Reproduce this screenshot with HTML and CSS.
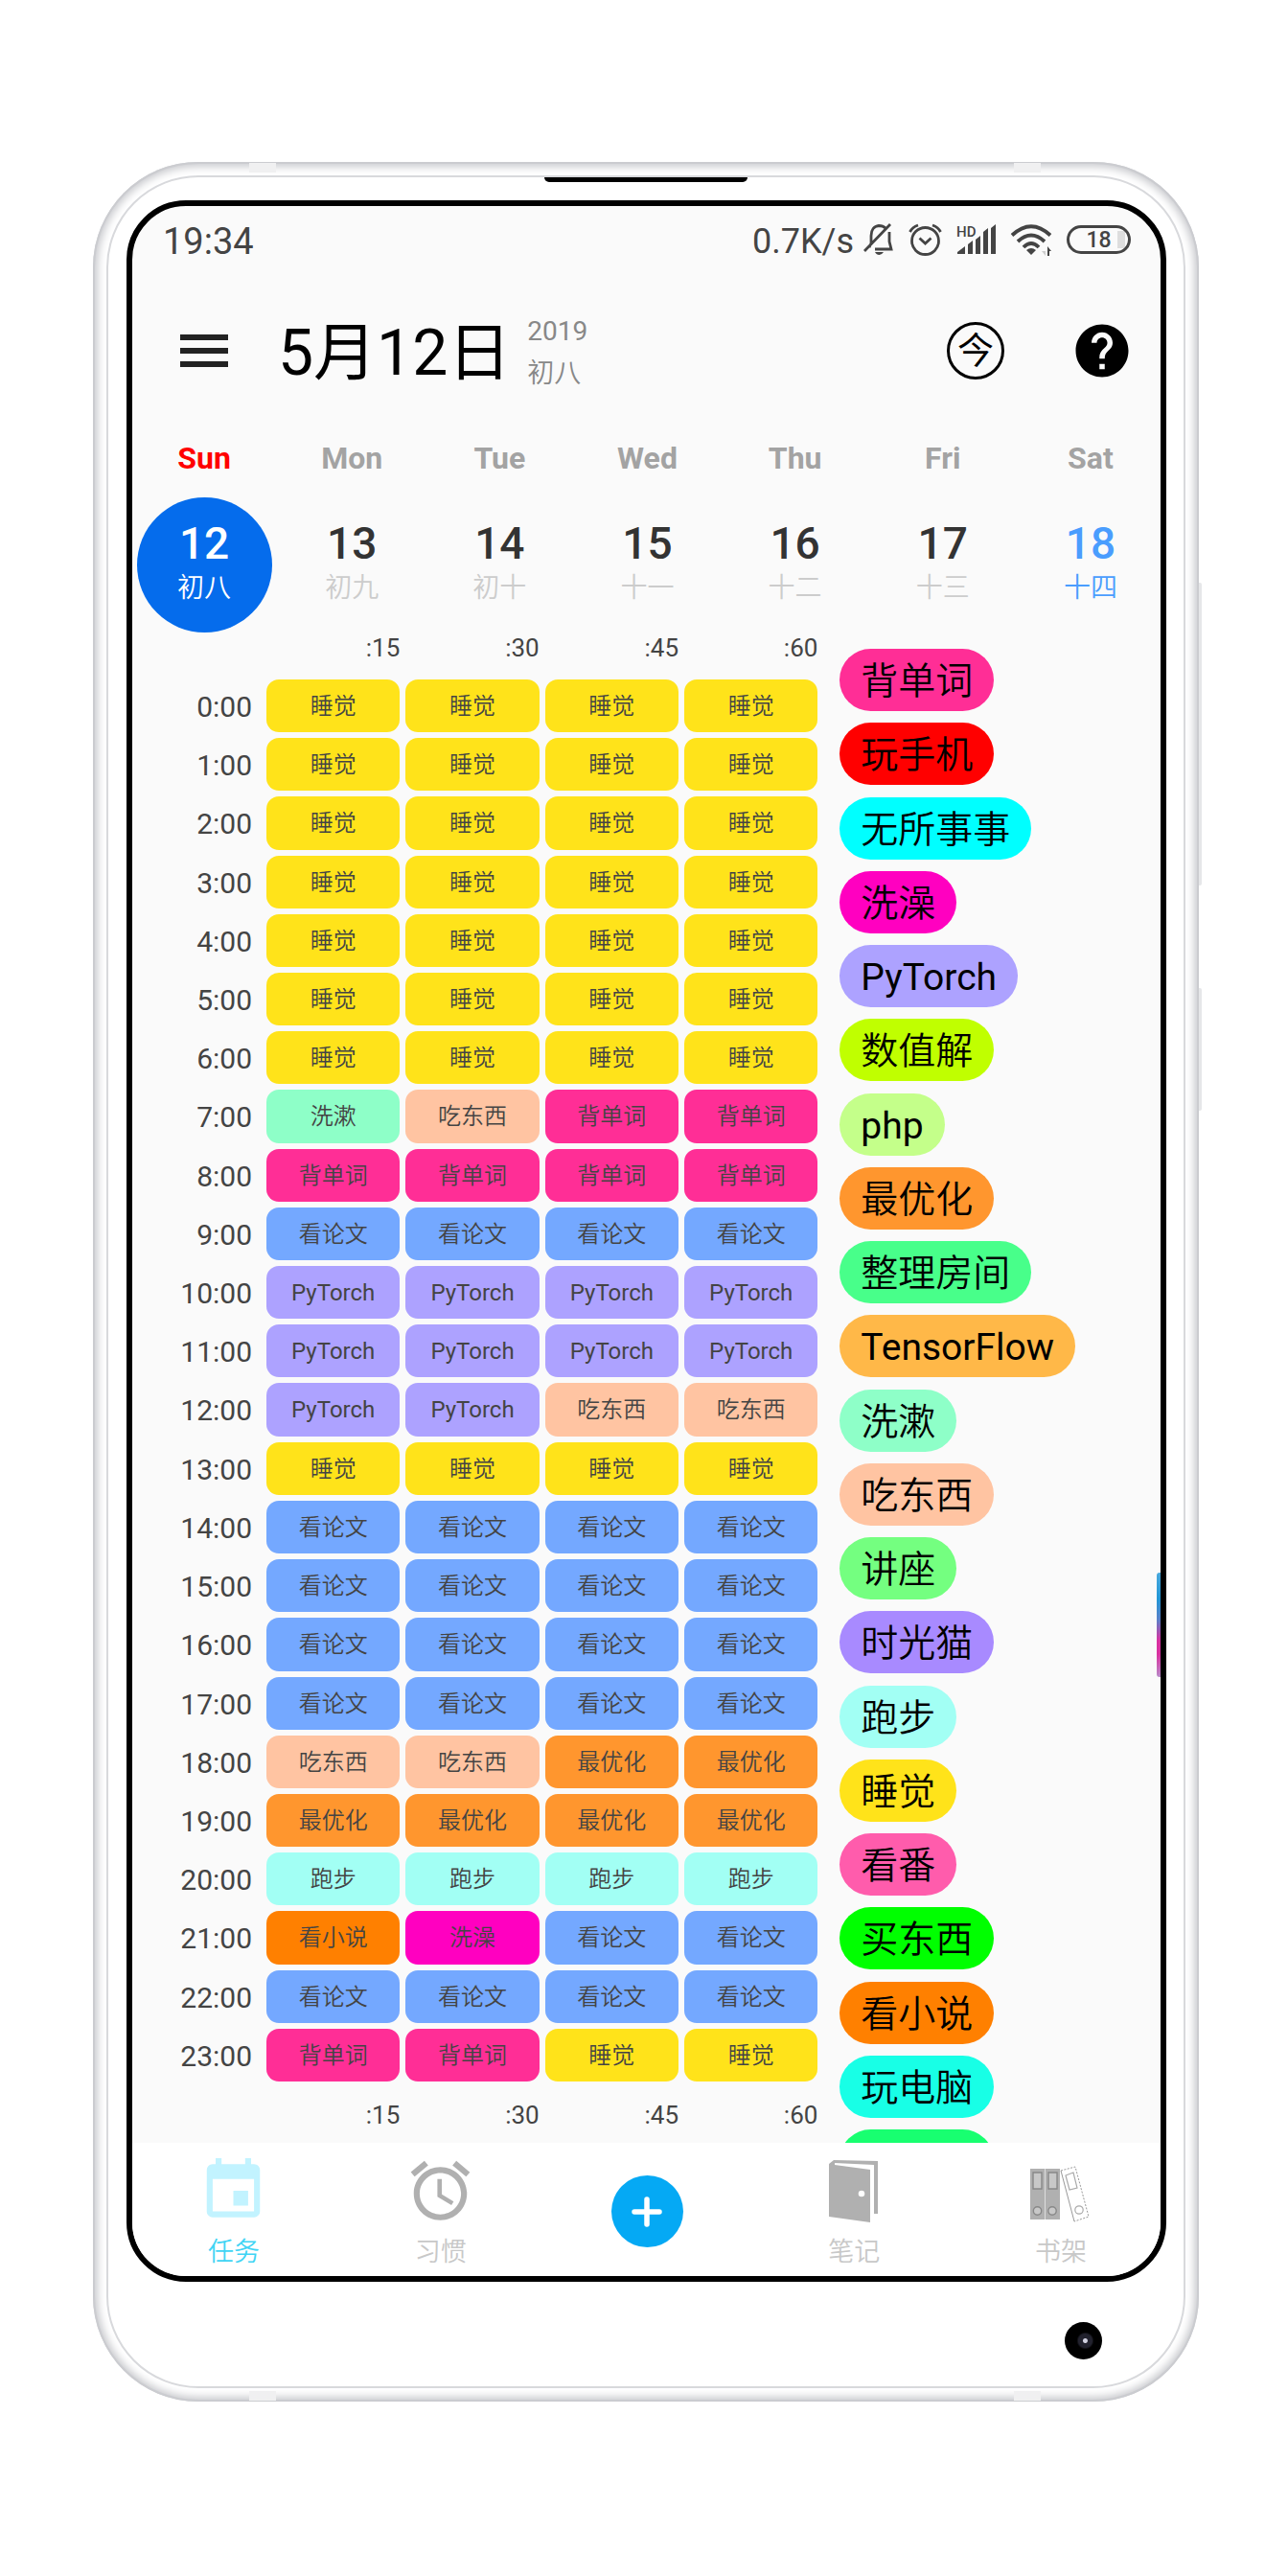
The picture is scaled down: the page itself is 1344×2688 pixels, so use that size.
FILE: index.html
```html
<!DOCTYPE html>
<html lang="zh-CN">
<head>
<meta charset="utf-8">
<meta name="viewport" content="width=device-width, initial-scale=1">
<title>5月12日</title>
<link rel="stylesheet" href="styles.css">
</head>
<body>
<main class="stage">
  <div class="phone">
    <span class="key key-volume"></span>
    <span class="key key-power"></span>
    <span class="antenna antenna-tl"></span>
    <span class="antenna antenna-tr"></span>
    <span class="antenna antenna-bl"></span>
    <span class="antenna antenna-br"></span>
    <div class="bezel">
      <span class="earpiece"></span>
      <div class="screen">
        <div class="statusbar">
          <span class="clock">19:34</span>
          <span class="rate">0.7K/s</span>
          <svg width="32" height="34" viewBox="0 0 32 34" fill="none" stroke="#444" stroke-width="2.800"><path d="M6 25 8 21V13C8 7 11 3 16 2.500C19 2.500 21 3 23 5M27 9V19L29 27H12M1 29 28 1"/><path d="M12 30H21Q19 33 16.500 33 13.500 33 12 30" fill="#444" stroke="none"/></svg>
          <svg width="35" height="34" viewBox="0 0 35 34" fill="none" stroke="#444" stroke-width="2.800"><circle cx="17.500" cy="18.500" r="14"/><path d="M11.500 15.500 17.500 21 23.500 15.500M1.500 9Q4 4 10 2M33.500 9Q31 4 25 2"/></svg>
          <svg width="41" height="34" viewBox="0 0 41 34" fill="#444"><text x="0" y="14" class="hd">HD</text><path d="M1 32V30L9 24V32ZM12 32V22L17 18V32ZM20 32V17L25 13V32ZM28 32V9L33 5V32ZM36 32V5L41 1V32Z"/></svg>
          <svg width="44" height="34" viewBox="0 0 44 34" fill="none" stroke="#444" stroke-width="3.800"><path d="M2 12.500Q22-6 42 12.500M8 19Q22 6 36 19M14 25Q22 17 30 25"/><path d="M17 28Q22 24 27 28L22 33Z" fill="#444" stroke="none"/><path d="M37 34 33 29H37Z" fill="#ccc" stroke="none"/><path d="M39 24 43 29H41V34H39Z" fill="#444" stroke="none"/></svg>
          <span class="battery">18</span>
        </div>

        <header class="appbar">
          <button class="menu" aria-label="菜单"><i></i><i></i><i></i></button>
          <h1>5月12日</h1>
          <p class="sub"><span>2019</span><span>初八</span></p>
          <button class="today">今</button>
          <button class="help" aria-label="帮助"><svg width="66" height="66" viewBox="0 0 24 24"><path d="M12 2C6.480 2 2 6.480 2 12s4.480 10 10 10 10-4.480 10-10S17.520 2 12 2zm1 17h-2v-2h2v2zm2.070-7.750l-.9.920C13.450 12.900 13 13.500 13 15h-2v-.5c0-1.100.45-2.100 1.170-2.830l1.240-1.260c.37-.36.59-.86.59-1.410 0-1.100-.9-2-2-2s-2 .9-2 2H8c0-2.210 1.790-4 4-4s4 1.790 4 4c0 .88-.36 1.680-.93 2.250z"/></svg></button>
        </header>

        <div class="week names">
          <span class="sun">Sun</span><span>Mon</span><span>Tue</span><span>Wed</span><span>Thu</span><span>Fri</span><span>Sat</span>
        </div>
        <div class="week days">
          <button class="day selected"><b>12</b><small>初八</small></button>
          <button class="day"><b>13</b><small>初九</small></button>
          <button class="day"><b>14</b><small>初十</small></button>
          <button class="day"><b>15</b><small>十一</small></button>
          <button class="day"><b>16</b><small>十二</small></button>
          <button class="day"><b>17</b><small>十三</small></button>
          <button class="day now"><b>18</b><small>十四</small></button>
        </div>

        <div class="board">
          <table class="hours">
            <thead><tr><td></td><th>:15</th><th>:30</th><th>:45</th><th>:60</th></tr></thead>
            <tbody>
              <tr><th>0:00</th><td class="sleep">睡觉</td><td class="sleep">睡觉</td><td class="sleep">睡觉</td><td class="sleep">睡觉</td></tr>
              <tr><th>1:00</th><td class="sleep">睡觉</td><td class="sleep">睡觉</td><td class="sleep">睡觉</td><td class="sleep">睡觉</td></tr>
              <tr><th>2:00</th><td class="sleep">睡觉</td><td class="sleep">睡觉</td><td class="sleep">睡觉</td><td class="sleep">睡觉</td></tr>
              <tr><th>3:00</th><td class="sleep">睡觉</td><td class="sleep">睡觉</td><td class="sleep">睡觉</td><td class="sleep">睡觉</td></tr>
              <tr><th>4:00</th><td class="sleep">睡觉</td><td class="sleep">睡觉</td><td class="sleep">睡觉</td><td class="sleep">睡觉</td></tr>
              <tr><th>5:00</th><td class="sleep">睡觉</td><td class="sleep">睡觉</td><td class="sleep">睡觉</td><td class="sleep">睡觉</td></tr>
              <tr><th>6:00</th><td class="sleep">睡觉</td><td class="sleep">睡觉</td><td class="sleep">睡觉</td><td class="sleep">睡觉</td></tr>
              <tr><th>7:00</th><td class="wash">洗漱</td><td class="eat">吃东西</td><td class="words">背单词</td><td class="words">背单词</td></tr>
              <tr><th>8:00</th><td class="words">背单词</td><td class="words">背单词</td><td class="words">背单词</td><td class="words">背单词</td></tr>
              <tr><th>9:00</th><td class="paper">看论文</td><td class="paper">看论文</td><td class="paper">看论文</td><td class="paper">看论文</td></tr>
              <tr><th>10:00</th><td class="torch">PyTorch</td><td class="torch">PyTorch</td><td class="torch">PyTorch</td><td class="torch">PyTorch</td></tr>
              <tr><th>11:00</th><td class="torch">PyTorch</td><td class="torch">PyTorch</td><td class="torch">PyTorch</td><td class="torch">PyTorch</td></tr>
              <tr><th>12:00</th><td class="torch">PyTorch</td><td class="torch">PyTorch</td><td class="eat">吃东西</td><td class="eat">吃东西</td></tr>
              <tr><th>13:00</th><td class="sleep">睡觉</td><td class="sleep">睡觉</td><td class="sleep">睡觉</td><td class="sleep">睡觉</td></tr>
              <tr><th>14:00</th><td class="paper">看论文</td><td class="paper">看论文</td><td class="paper">看论文</td><td class="paper">看论文</td></tr>
              <tr><th>15:00</th><td class="paper">看论文</td><td class="paper">看论文</td><td class="paper">看论文</td><td class="paper">看论文</td></tr>
              <tr><th>16:00</th><td class="paper">看论文</td><td class="paper">看论文</td><td class="paper">看论文</td><td class="paper">看论文</td></tr>
              <tr><th>17:00</th><td class="paper">看论文</td><td class="paper">看论文</td><td class="paper">看论文</td><td class="paper">看论文</td></tr>
              <tr><th>18:00</th><td class="eat">吃东西</td><td class="eat">吃东西</td><td class="optim">最优化</td><td class="optim">最优化</td></tr>
              <tr><th>19:00</th><td class="optim">最优化</td><td class="optim">最优化</td><td class="optim">最优化</td><td class="optim">最优化</td></tr>
              <tr><th>20:00</th><td class="run">跑步</td><td class="run">跑步</td><td class="run">跑步</td><td class="run">跑步</td></tr>
              <tr><th>21:00</th><td class="novel">看小说</td><td class="bath">洗澡</td><td class="paper">看论文</td><td class="paper">看论文</td></tr>
              <tr><th>22:00</th><td class="paper">看论文</td><td class="paper">看论文</td><td class="paper">看论文</td><td class="paper">看论文</td></tr>
              <tr><th>23:00</th><td class="words">背单词</td><td class="words">背单词</td><td class="sleep">睡觉</td><td class="sleep">睡觉</td></tr>
            </tbody>
            <tfoot><tr><td></td><th>:15</th><th>:30</th><th>:45</th><th>:60</th></tr></tfoot>
          </table>

          <div class="tags">
            <ul>
              <li><button class="words">背单词</button></li>
              <li><button class="phone-play">玩手机</button></li>
              <li><button class="idle">无所事事</button></li>
              <li><button class="bath">洗澡</button></li>
              <li><button class="torch">PyTorch</button></li>
              <li><button class="numeric">数值解</button></li>
              <li><button class="php">php</button></li>
              <li><button class="optim">最优化</button></li>
              <li><button class="tidy">整理房间</button></li>
              <li><button class="tensor">TensorFlow</button></li>
              <li><button class="wash">洗漱</button></li>
              <li><button class="eat">吃东西</button></li>
              <li><button class="lecture">讲座</button></li>
              <li><button class="timecat">时光猫</button></li>
              <li><button class="run">跑步</button></li>
              <li><button class="sleep">睡觉</button></li>
              <li><button class="anime">看番</button></li>
              <li><button class="shop">买东西</button></li>
              <li><button class="novel">看小说</button></li>
              <li><button class="computer">玩电脑</button></li>
              <li><span class="next"></span></li>
            </ul>
          </div>
          <span class="edge"></span>
        </div>

        <nav class="tabs">
          <a class="tab active" href="#tasks">
            <svg width="75" height="74" viewBox="0 0 24 24" fill="#c2f3ff"><path d="M17 12h-5v5h5v-5zM16 1v2H8V1H6v2H5c-1.110 0-1.990.9-1.990 2L3 19c0 1.100.89 2 2 2h14c1.100 0 2-.9 2-2V5c0-1.100-.9-2-2-2h-1V1h-2zm3 18H5V8h14v11z"/></svg>
            <span>任务</span>
          </a>
          <a class="tab" href="#habits">
            <svg width="75" height="74" viewBox="0 0 24 24" fill="#b0b0b0"><path d="M22 5.720l-4.600-3.860-1.290 1.530 4.600 3.860L22 5.720zM7.880 3.390L6.600 1.860 2 5.710l1.290 1.530 4.590-3.850zM12.500 8H11v6l4.750 2.850.75-1.230-4-2.370V8zM12 4c-4.970 0-9 4.030-9 9s4.020 9 9 9c4.970 0 9-4.030 9-9s-4.030-9-9-9zm0 16c-3.870 0-7-3.130-7-7s3.130-7 7-7 7 3.130 7 7-3.130 7-7 7z"/></svg>
            <span>习惯</span>
          </a>
          <button class="add" aria-label="添加"><svg width="32" height="32" viewBox="0 0 32 32" stroke="#fff" stroke-width="5.500" stroke-linecap="round"><path d="M16 3V29M3 16H29"/></svg></button>
          <a class="tab" href="#notes">
            <svg width="75" height="74" viewBox="0 0 75 74"><path d="M11 9 16 5 62 6V61H58V10L17 8V10L54 15V70L11 64Z" fill="#b0b0b0"/><circle cx="45" cy="40" r="3.300" fill="#fff"/></svg>
            <span>笔记</span>
          </a>
          <a class="tab" href="#shelf">
            <svg width="75" height="74" viewBox="0 0 75 74" fill="none"><path d="M5 14H36V67H5Z" fill="#b0b0b0"/><path d="M20.500 14V67" stroke="#ddd"/><g fill="#c8c8c8" stroke="#888" stroke-width="1.400"><path d="M8 18H17V35H8ZM24 18H33V35H24Z"/><circle cx="12.500" cy="58" r="4.200"/><circle cx="28" cy="58" r="4.200"/></g><path d="M37 16 51 69" stroke="#999"/><path d="M37 16 52 12 66 64 51 69" stroke="#999" stroke-dasharray="2 1.500"/><g stroke="#aaa" stroke-width="1.200"><path d="M42 21 50 18 54 34 46 36Z"/><circle cx="56" cy="57" r="4.200"/></g></svg>
            <span>书架</span>
          </a>
        </nav>
      </div>
      <span class="camera"></span>
    </div>
  </div>
</main>
</body>
</html>
```
FILE: styles.css
```css
* { box-sizing: border-box; }
body { margin: 0; background: #fff; font-family: Roboto, "Noto Sans CJK SC", sans-serif; color: #000; }
button { border: 0; padding: 0; background: none; font: inherit; color: inherit; }
ul, p, h1 { margin: 0; padding: 0; }
ul { list-style: none; }

.stage { padding: 169px 93px 181px 97px; }

/* handset */
.phone { position: relative; padding: 14px; border-radius: 110px; background: #fff; box-shadow: inset 0 0 0 2px #cbccd0, inset 0 0 8px 5px #c9cace; }
.bezel { position: relative; border: 2px solid #d8d9dc; border-radius: 96px; padding: 24px 18px 109px 19px; background: #fff; }
.earpiece { position: absolute; top: 0; left: 50%; width: 212px; height: 5px; margin-left: -106px; background: #000; border-radius: 0 0 12px 12px; }
.key { position: absolute; left: 100%; width: 3px; background: #e6e7e9; border-radius: 0 2px 2px 0; }
.key-volume { top: 439px; height: 316px; }
.key-power { top: 862px; height: 128px; }
.antenna { position: absolute; width: 28px; height: 10px; background: #f0f0f1; }
.antenna-tl { top: 1px; left: 163px; }
.antenna-tr { top: 1px; right: 165px; }
.antenna-bl { bottom: 1px; left: 163px; }
.antenna-br { bottom: 1px; right: 165px; }
.camera { position: absolute; right: 85px; bottom: 28px; width: 39px; height: 39px; border-radius: 50%; background: radial-gradient(circle at 55% 50%, #d0d0e0 0 2px, #22222e 3px 7px, #000 9px); }

.screen { position: relative; border: 6px solid #000; border-radius: 62px; overflow: hidden; background: #fafafa; }

/* status bar */
.statusbar { display: flex; align-items: center; gap: 15px; height: 80px; padding: 0 31px 10px 32px; color: #444; }
.clock { flex: 1; font-size: 38px; line-height: 72px; padding-top: 4px; }
.rate { font-size: 36px; line-height: 72px; margin-right: -5px; padding-top: 4px; }
.hd { font: 500 15px Roboto, sans-serif; }
.battery { width: 67px; height: 30px; border: 3px solid #444; border-radius: 15px; font-size: 23px; font-weight: 500; line-height: 25px; text-align: center; background: linear-gradient(#ddd, #ddd) 50px 50% / 8px 18px no-repeat; }

/* title */
.appbar { display: flex; align-items: center; height: 142px; padding: 0 28px 0 50px; }
.menu { display: flex; flex-direction: column; gap: 8px; width: 50px; margin-right: 52px; }
.menu i { height: 6px; background: #222; }
h1 { font-size: 66px; font-weight: 400; line-height: 76px; padding-top: 6px; }
.sub { display: flex; flex-direction: column; flex: 1; margin-left: 17px; padding-top: 3px; font-size: 28px; line-height: 44px; color: #888; }
.today { width: 60px; height: 60px; margin-right: 69px; border: 3px solid #000; border-radius: 50%; font-size: 38px; line-height: 50px; }
.help { display: flex; }

/* week strip */
.week { display: grid; grid-template-columns: repeat(7, 1fr); margin: 0 -4px 0 -2px; justify-items: center; }
.names { height: 82px; font-size: 32px; font-weight: 700; line-height: 82px; color: #a3a3a3; }
.sun { color: #f00; }
.day { display: flex; flex-direction: column; align-items: center; width: 141px; height: 141px; padding-top: 20px; border-radius: 50%; color: #333; }
.day b { font-size: 46px; font-weight: 500; line-height: 56px; }
.day small { font-size: 28px; line-height: 37px; color: #ccc; }
.selected { background: #056cec; }
.selected, .selected small { color: #fff; }
.now, .now small { color: #4a9dfe; }

.sub, .day small, .tab, .tags, .hours td { font-weight: 350; }
.sub span:first-child { font-weight: 400; }

/* timetable */
.board { position: relative; display: flex; }
.hours { flex: 0 0 66.67%; display: block; color: #444; }
.hours thead, .hours tfoot { display: block; font-size: 26px; }
.hours thead { height: 49px; line-height: 33px; }
.hours tfoot { height: 64px; line-height: 70px; }
.hours tbody { display: grid; grid-auto-rows: 1fr; gap: 6px; height: 1463px; }
.hours tr { display: grid; grid-template-columns: 134px repeat(4, 1fr); gap: 6px; }
.hours th { padding: 0; font-weight: 400; text-align: right; }
.hours tbody th { padding: 2px 9px 0 0; font-size: 30px; line-height: 53px; }
.hours tbody td { padding: 2px 0 0; border-radius: 13px; font-size: 24px; line-height: 53px; text-align: center; }
.hours tbody .torch, .tags .torch, .php, .tensor { font-weight: 400; }

.tags { flex: 1; height: 1576px; padding: 17px 0 0 23px; overflow: hidden; }
.tags ul { display: flex; flex-direction: column; justify-content: space-between; height: 1610px; }
.tags li { display: flex; }
.tags button, .next { height: 65px; padding: 4px 22px 0; border-radius: 33px; font-size: 39px; line-height: 61px; }
.next { width: 161px; background: #18ff70; }
.edge { position: absolute; right: 0; top: 981px; width: 4px; height: 109px; border-radius: 3px 0 0 3px; background: linear-gradient(#4aa8dc, #2196d6 25%, #5a80c8 45%, #d831a0 65%, #d831a0 78%, #b88ac8); }

.sleep { background: #ffe31a; }
.wash { background: #8effc8; }
.eat { background: #ffc4a2; }
.words { background: #ff2e96; }
.paper { background: #74a8ff; }
.torch { background: #ada2ff; }
.optim { background: #ff962e; }
.run { background: #a2fff4; }
.novel { background: #ff8000; }
.bath { background: #ff00c0; }
.phone-play { background: #f00; }
.idle { background: #0ff; }
.numeric { background: #c0ff00; }
.php { background: #c4ff8a; }
.tidy { background: #48ff8a; }
.tensor { background: #ffb848; }
.lecture { background: #74ff80; }
.timecat { background: #a88aff; }
.anime { background: #ff5cac; }
.shop { background: #0f0; }
.computer { background: #18ffe6; }

/* bottom navigation */
.tabs { display: grid; grid-template-columns: repeat(5, 1fr); justify-items: center; height: 139px; padding-top: 13px; margin: 0 -4px 0 -2px; background: #fff; }
.tab { display: flex; flex-direction: column; align-items: center; gap: 8px; font-size: 27px; line-height: 38px; color: #c8c8c8; text-decoration: none; }
.active { color: #40d4f4; }
.add { display: flex; align-items: center; justify-content: center; width: 75px; height: 75px; margin-top: 21px; border-radius: 50%; background: #05a9f4; }
```
